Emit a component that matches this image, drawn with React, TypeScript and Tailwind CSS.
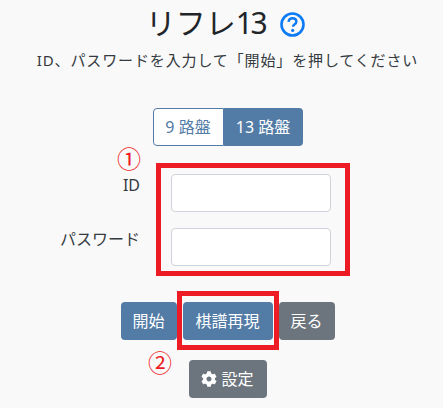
import React from "react";
import { FaCog } from "react-icons/fa";

const btn = "h-[38px] rounded-[4px] text-white text-[16px] flex items-center justify-center";

export default function App() {
  return (
    <div
      className="relative w-[443px] h-[408px] overflow-hidden bg-[#f9f9f9] text-[#212529] flex flex-col items-center pl-[12px]"
      style={{ fontFamily: '"Noto Sans", "Noto Sans CJK JP", sans-serif' }}
    >
      <div className="h-[45px] flex items-center mr-[4px]">
        <span className="text-[30px] leading-[44px] font-normal">リフレ<span className="tracking-[-2.5px]">13</span></span>
        <svg className="ml-[15px] mt-[3px]" width="25" height="25" viewBox="0 0 25 25" fill="none">
          <circle cx="12.5" cy="12.5" r="11" stroke="#0d7bf5" strokeWidth="2.6" />
          <path d="M8.6 9.8c.2-2.3 1.8-3.5 3.9-3.5 2.2 0 3.9 1.3 3.9 3.3 0 1.5-.9 2.3-2 3-1 .6-1.4 1.1-1.4 2.2" stroke="#0d7bf5" strokeWidth="2.4" />
          <circle cx="12.7" cy="18.4" r="1.6" fill="#0d7bf5" />
        </svg>
      </div>
      <p className="mt-[3px] text-[15px] leading-[24px] tracking-[0.87px] text-[#343a40] whitespace-nowrap">
        ID、パスワードを入力して「開始」を押してください
      </p>

      <div className="mt-[36px] flex h-[38px] text-[16px]">
        <div className="w-[71px] bg-white border border-[#527ba6] rounded-l-[4px] text-[#527ba6] flex items-center justify-center whitespace-nowrap">9 路盤</div>
        <div className="w-[79px] bg-[#527ba6] rounded-r-[4px] text-white flex items-center justify-center whitespace-nowrap">13 路盤</div>
      </div>

      <div className="mt-[28px] w-[431px] grid grid-cols-[128px_160px] gap-x-[31px] gap-y-[16px]">
        <label className="h-[38px] text-[16px] text-right leading-[22px] text-[#343a40]">ID</label>
        <input className="h-[38px] bg-white border border-[#ced4da] rounded-[4px]" />
        <label className="h-[38px] text-[16px] text-right leading-[22px] text-[#343a40]">パスワード</label>
        <input className="h-[38px] bg-white border border-[#ced4da] rounded-[4px]" />
      </div>

      <div className="mt-[36px] flex gap-[6px]">
        <button className={`${btn} w-[56px] bg-[#527ba6]`}>開始</button>
        <button className={`${btn} w-[90px] bg-[#527ba6]`}>棋譜再現</button>
        <button className={`${btn} w-[56px] bg-[#6c757d]`}>戻る</button>
      </div>
      <button className={`${btn} mt-[20px] w-[78px] bg-[#6c757d] gap-[4px]`}>
        <FaCog className="w-[16px] h-[16px]" />
        設定
      </button>

      <div className="absolute left-[156px] top-[163px] w-[194px] h-[113px] border-[5px] border-[#ed1c24]" />
      <div className="absolute left-[177px] top-[291px] w-[102px] h-[59px] border-[5px] border-[#ed1c24]" />
      <span className="absolute left-[116px] top-[144px] w-[26px] text-center text-[24px] leading-[30px] text-[#ed1c24]">①</span>
      <span className="absolute left-[147px] top-[348px] w-[26px] text-center text-[24px] leading-[30px] text-[#ed1c24]">②</span>
    </div>
  );
}
